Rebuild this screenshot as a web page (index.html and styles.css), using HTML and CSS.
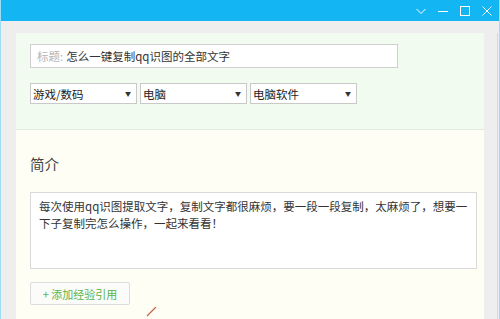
FILE: index.html
```html
<!DOCTYPE html>
<html lang="zh-CN">

<head>
    <meta charset="UTF-8">
    <title>发布经验</title>
    <link rel="stylesheet" href="styles.css">
</head>

<body>
    <div class="window">
        <div class="titlebar">
            <svg class="tb-icon" width="12" height="12" viewBox="0 0 12 12"><path d="M1.5 4 L6 8.5 L10.5 4" fill="none" stroke="#fff" stroke-width="1"/></svg>
            <svg class="tb-icon" width="12" height="12" viewBox="0 0 12 12"><path d="M1 6.5 H11" fill="none" stroke="#fff" stroke-width="1"/></svg>
            <svg class="tb-icon" width="12" height="12" viewBox="0 0 12 12"><rect x="1.5" y="1.5" width="9" height="9" fill="none" stroke="#fff" stroke-width="1"/></svg>
            <svg class="tb-icon" width="12" height="12" viewBox="0 0 12 12"><path d="M1.5 1.5 L10.5 10.5 M10.5 1.5 L1.5 10.5" fill="none" stroke="#fff" stroke-width="1"/></svg>
        </div>

        <div class="content">
            <div class="panel">
                <div class="head">
                    <div class="title-input">
                        <span class="label">标题:</span>
                        <span class="value">怎么一键复制qq识图的全部文字</span>
                    </div>
                    <div class="selects">
                        <div class="select">游戏/数码<span class="arrow">▼</span></div>
                        <div class="select">电脑<span class="arrow">▼</span></div>
                        <div class="select">电脑软件<span class="arrow">▼</span></div>
                    </div>
                </div>

                <div class="intro">
                    <h2>简介</h2>
                    <div class="textarea">
                        每次使用qq识图提取文字，复制文字都很麻烦，要一段一段复制，太麻烦了，想要一<br>下子复制完怎么操作，一起来看看！
                    </div>
                    <div class="actions">
                        <button class="add-btn">+ 添加经验引用</button>
                        <svg class="mark" width="12" height="10" viewBox="0 0 12 10"><path d="M1 9 L6 4 M6 4 L10 0" fill="none" stroke="#c9604a" stroke-width="1.2"/></svg>
                    </div>
                </div>
            </div>
            <div class="scrollbar"></div>
        </div>
    </div>
</body>

</html>
```

FILE: styles.css
```css
* {
    box-sizing: border-box;
    margin: 0;
    padding: 0;
}

body {
    font-family: "Microsoft YaHei", "Noto Sans CJK SC", sans-serif;
    width: 500px;
    height: 319px;
    overflow: hidden;
    background-color: #eeeeee;
}

.window {
    height: 319px;
    border-left: 1px solid #9fdcf5;
    border-right: 1px solid #9fdcf5;
    display: flex;
    flex-direction: column;
}

.titlebar {
    height: 21px;
    background-color: #13b6f3;
    display: flex;
    justify-content: flex-end;
    align-items: center;
    gap: 10px;
    padding-right: 6px;
}

.tb-icon {
    display: block;
}

.content {
    flex: 1;
    display: flex;
    padding: 12px 0 0 15px;
    background-color: #eeeeee;
}

.panel {
    width: 468px;
    display: flex;
    flex-direction: column;
}

.head {
    height: 97px;
    background-color: #f2fbef;
    border-bottom: 1px solid #dfe9dd;
    padding: 11px 14px 0 14px;
}

.title-input {
    width: 368px;
    height: 24px;
    background-color: #fff;
    border: 1px solid #cfcfcf;
    display: flex;
    align-items: center;
    padding-left: 6px;
    font-size: 11.5px;
}

.title-input .label {
    color: #b5b5b5;
    margin-right: 3px;
}

.title-input .value {
    color: #333;
}

.selects {
    display: flex;
    gap: 3px;
    margin-top: 15px;
}

.select {
    width: 107px;
    height: 21px;
    background-color: #fff;
    border: 1px solid #c9c9c9;
    font-size: 11.5px;
    color: #222;
    display: flex;
    align-items: center;
    justify-content: space-between;
    padding: 0 5px 0 2px;
}

.select .arrow {
    font-size: 6px;
    color: #333;
}

.intro {
    flex: 1;
    background-color: #fefef4;
    padding: 24px 7px 0 14px;
}

h2 {
    font-size: 14.5px;
    font-weight: normal;
    color: #444;
    line-height: 20px;
}

.textarea {
    margin-top: 18px;
    width: 447px;
    height: 77px;
    background-color: #fff;
    border: 1px solid #d9d9d9;
    padding: 5px 0 0 8px;
    font-size: 11.5px;
    line-height: 17px;
    color: #333;
    white-space: nowrap;
}

.actions {
    display: flex;
    align-items: flex-end;
    margin-top: 13px;
}

.add-btn {
    width: 100px;
    height: 23px;
    background-color: #fbfbf9;
    border: 1px solid #dcdcdc;
    border-radius: 2px;
    font-family: inherit;
    font-size: 11px;
    color: #58b449;
}

.mark {
    margin-left: 16px;
    margin-bottom: -12px;
}

.scrollbar {
    width: 13px;
    margin-left: 1px;
    border-right: 1px solid #d8d8d8;
}
```
